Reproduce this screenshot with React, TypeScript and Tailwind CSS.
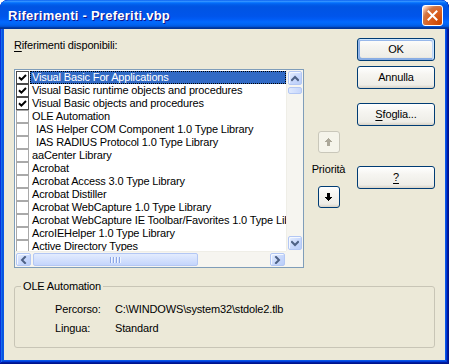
import React from "react";

type Item = { t: string; c?: boolean; sel?: boolean; indent?: boolean };

const items: Item[] = [
  { t: "Visual Basic For Applications", c: true, sel: true },
  { t: "Visual Basic runtime objects and procedures", c: true },
  { t: "Visual Basic objects and procedures", c: true },
  { t: "OLE Automation" },
  { t: "IAS Helper COM Component 1.0 Type Library", indent: true },
  { t: "IAS RADIUS Protocol 1.0 Type Library", indent: true },
  { t: "aaCenter Library" },
  { t: "Acrobat" },
  { t: "Acrobat Access 3.0 Type Library" },
  { t: "Acrobat Distiller" },
  { t: "Acrobat WebCapture 1.0 Type Library" },
  { t: "Acrobat WebCapture IE Toolbar/Favorites 1.0 Type Library" },
  { t: "AcroIEHelper 1.0 Type Library" },
  { t: "Active Directory Types" },
];

const xpBtn =
  "flex items-center justify-center h-[23px] w-[78px] rounded-[3px] border border-[#003c74] bg-[linear-gradient(180deg,#ffffff_0%,#f6f5f1_35%,#eeede7_85%,#d8d2c6_100%)] text-[11px] leading-[13px] text-black";

const sbBtn =
  "flex items-center justify-center rounded-[2px] border border-[#b3c7f4] bg-[linear-gradient(135deg,#e6eefe_0%,#c8d8fc_55%,#b9cdf9_100%)] shadow-[inset_1px_1px_#f4f8ff]";

function Chevron({ dir }: { dir: "up" | "down" | "left" | "right" }) {
  const d =
    dir === "up"
      ? "M1 5 L4 2 L7 5"
      : dir === "down"
      ? "M1 2 L4 5 L7 2"
      : dir === "left"
      ? "M5 1 L2 4 L5 7"
      : "M2 1 L5 4 L2 7";
  const w = dir === "up" || dir === "down" ? 8 : 7;
  const h = dir === "up" || dir === "down" ? 7 : 8;
  return (
    <svg width={w} height={h} viewBox={`0 0 ${w} ${h}`}>
      <path d={d} fill="none" stroke="#4d6185" strokeWidth="2" strokeLinecap="square" />
    </svg>
  );
}

function BlockArrow({ dir, color }: { dir: "up" | "down"; color: string }) {
  const pts =
    dir === "up"
      ? "3.5,0 7,4 5,4 5,8 2,8 2,4 0,4"
      : "2,0 5,0 5,4 7,4 3.5,8 0,4 2,4";
  return (
    <svg width="7" height="8" viewBox="0 0 7 8" shapeRendering="crispEdges">
      <polygon points={pts} fill={color} />
    </svg>
  );
}

function CheckBox({ checked }: { checked?: boolean }) {
  return (
    <div
      className={
        "w-[13px] h-[13px] shrink-0 bg-white border flex items-center justify-center " +
        (checked ? "border-[#4a4a4a]" : "border-[#a9a9a9]")
      }
    >
      {checked && (
        <svg width="9" height="9" viewBox="0 0 9 9">
          <path d="M1 4.2 L3.4 6.6 L8 2" fill="none" stroke="#000" strokeWidth="2" />
        </svg>
      )}
    </div>
  );
}

function Row({ it }: { it: Item }) {
  return (
    <div className="h-[13px] flex items-center whitespace-nowrap overflow-hidden">
      <div className="ml-[1px]">
        <CheckBox checked={it.c} />
      </div>
      <div
        className={
          "ml-[1px] flex-1 h-[13px] pl-[2px] leading-[13px] " +
          (it.sel
            ? "bg-[#316ac5] text-white outline-1 outline-dotted outline-[#000] outline-offset-[-1px]"
            : "text-black")
        }
      >
        <span className={it.indent ? "pl-[4px]" : ""}>{it.t}</span>
      </div>
    </div>
  );
}

function ListBox() {
  return (
    <div className="mt-[17px] w-[290px] h-[199px] border border-[#7f9db9] bg-white grid grid-cols-[271px_17px] grid-rows-[181px_16px]">
      <div className="overflow-hidden pt-[1px] text-[11px]">
        {items.map((it, i) => (
          <Row key={i} it={it} />
        ))}
      </div>
      {/* vertical scrollbar */}
      <div className="bg-[#f6f5f0] border-l border-[#efeee7] flex flex-col px-[1px] py-[1px]">
        <div className={sbBtn + " h-[14px]"}>
          <Chevron dir="up" />
        </div>
        <div className="mt-[2px] h-[7px] rounded-[2px] border border-[#b3c7f4] bg-[linear-gradient(90deg,#dfe9fe,#c6d6fc)]" />
        <div className="flex-1" />
        <div className={sbBtn + " h-[14px]"}>
          <Chevron dir="down" />
        </div>
      </div>
      {/* horizontal scrollbar */}
      <div className="bg-[#f6f5f0] border-t border-[#efeee7] flex flex-row px-[1px] py-[1px]">
        <div className={sbBtn + " w-[15px]"}>
          <Chevron dir="left" />
        </div>
        <div className="ml-[2px] w-[165px] rounded-[2px] border border-[#b3c7f4] bg-[linear-gradient(180deg,#e3ecfe,#c4d5fc)] flex items-center justify-center gap-[1px]">
          {[0, 1, 2, 3].map((k) => (
            <div key={k} className="flex">
              <div className="w-[1px] h-[6px] bg-[#8ca6e6]" />
              <div className="w-[1px] h-[6px] bg-[#f0f5ff]" />
            </div>
          ))}
        </div>
        <div className="flex-1" />
        <div className={sbBtn + " w-[15px]"}>
          <Chevron dir="right" />
        </div>
      </div>
      <div className="bg-[#f6f5f0]" />
    </div>
  );
}

export default function App() {
  return (
    <div className="w-[449px] h-[364px] bg-white font-['Liberation_Sans',Arial,sans-serif] tracking-[-0.15px] text-[11px] select-none">
      <div className="w-full h-full flex flex-col rounded-t-[8px] overflow-hidden bg-[#0a57e6] shadow-[inset_-1px_-1px_#00138c,inset_1px_1px_#0831d9,inset_-2px_-2px_#001ea0,inset_2px_2px_#166aee,inset_-3px_-3px_#003bda,inset_3px_3px_#0855dd]">
        {/* Title bar */}
        <div className="h-[29px] shrink-0 flex items-start pl-[8px] pr-[6px] rounded-t-[8px] bg-[linear-gradient(180deg,#0058ee_0%,#3a93ff_4%,#288eff_6%,#127dff_8%,#036ffc_10%,#0262ee_14%,#0057e5_20%,#0054e3_24%,#0055eb_56%,#005bf5_66%,#026afe_76%,#0062ef_86%,#0052d6_92%,#0040ab_94%,#003092_100%)]">
          <div className="mt-[8px] text-[13px] leading-[15px] font-bold tracking-[0.25px] text-white [text-shadow:1px_1px_#0f1089]">
            Riferimenti - Preferiti.vbp
          </div>
          <div className="ml-auto mt-[5px] w-[21px] h-[21px] rounded-[3px] border border-white bg-[radial-gradient(circle_at_90%_90%,#cc4600_0%,#dc6527_55%,#cd7546_70%,#ffccb2_90%,#ffffff_100%)] flex items-center justify-center">
            <svg width="11" height="11" viewBox="0 0 11 11">
              <path d="M1.5 1.5 L9.5 9.5 M9.5 1.5 L1.5 9.5" stroke="#fff" strokeWidth="2" strokeLinecap="square" />
            </svg>
          </div>
        </div>

        {/* Client area */}
        <div className="flex-1 mx-[4px] mb-[4px] bg-[#ece9d8] px-[10px] flex flex-col text-black">
          <div className="flex h-[239px] shrink-0">
            {/* Left column */}
            <div className="w-[290px] pt-[10px] flex flex-col">
              <div className="leading-[13px]">
                <span className="underline underline-offset-[2px]">R</span>iferimenti disponibili:
              </div>
              <ListBox />
            </div>
            {/* Middle column */}
            <div className="w-[52px] pt-[102px] flex flex-col items-center">
              <div className="w-[22px] h-[22px] rounded-[3px] border border-[#c9c7ba] bg-[#f5f4ea] flex items-center justify-center">
                <BlockArrow dir="up" color="#aca899" />
              </div>
              <div className="mt-[10px] leading-[13px]">Priorità</div>
              <div className="mt-[10px] w-[22px] h-[22px] rounded-[3px] border border-[#003c74] bg-[linear-gradient(180deg,#ffffff_0%,#f6f5f1_35%,#eeede7_85%,#d8d2c6_100%)] flex items-center justify-center">
                <BlockArrow dir="down" color="#000000" />
              </div>
            </div>
            {/* Right column */}
            <div className="ml-[4px] w-[78px] pt-[9px] flex flex-col">
              <div className={xpBtn + " shadow-[inset_-1px_1px_#cee7ff,inset_1px_2px_#98b8ea,inset_-2px_2px_#bcd4f6,inset_1px_-1px_#89ade4,inset_2px_-2px_#89ade4]"}>
                OK
              </div>
              <div className={xpBtn + " mt-[5px]"}>Annulla</div>
              <div className={xpBtn + " mt-[14px]"}>
                <span>
                  <span className="underline underline-offset-[2px]">S</span>foglia...
                </span>
              </div>
              <div className={xpBtn + " mt-[40px]"}>
                <span className="underline underline-offset-[2px]">?</span>
              </div>
            </div>
          </div>

          {/* Group box */}
          <fieldset className="mt-[12px] w-[421px] border border-[#c8c5b6] rounded-[3px] px-0 pt-[10px] pb-[12px]">
            <legend className="ml-[6px] px-[2px] leading-[13px]">OLE Automation</legend>
            <div className="pl-[40px]">
              <div className="flex leading-[13px]">
                <div className="w-[60px]">Percorso:</div>
                <div>{"C:\\WINDOWS\\system32\\stdole2.tlb"}</div>
              </div>
              <div className="flex leading-[13px] mt-[6px]">
                <div className="w-[60px]">Lingua:</div>
                <div>Standard</div>
              </div>
            </div>
          </fieldset>
        </div>
      </div>
    </div>
  );
}
